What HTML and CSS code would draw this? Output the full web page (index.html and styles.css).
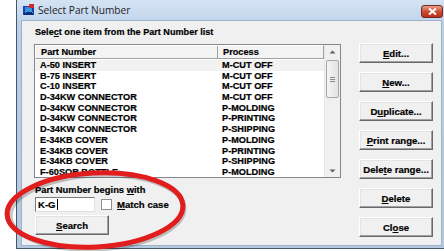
FILE: index.html
```html
<!DOCTYPE html>
<html lang="en">
<head>
    <meta charset="UTF-8">
    <title>Select Part Number</title>
    <link rel="stylesheet" href="styles.css">
</head>
<body>
    <div class="window">
        <div class="titlebar">
            <svg class="app-icon" width="12" height="12" viewBox="0 0 12 12">
                <rect x="0" y="2" width="11" height="9" fill="#1a3fb0"/>
                <rect x="2" y="3" width="7" height="5" fill="#3a8ae0"/>
                <rect x="6" y="0" width="5" height="4" fill="#d02a2a"/>
                <rect x="1" y="8" width="9" height="3" fill="#0c2a80"/>
                <path d="M2 9 L6 5 L10 9" stroke="#30c0c0" stroke-width="1" fill="none"/>
            </svg>
            <span class="title">Select Part Number</span>
            <div class="close-btn">
                <svg width="9" height="7" viewBox="0 0 9 7">
                    <path d="M1 0.5 L8 6.5 M8 0.5 L1 6.5" stroke="#fff" stroke-width="2"/>
                </svg>
            </div>
        </div>

        <div class="client">
            <div class="left">
                <div class="caption">Sele<u>c</u>t one item from the Part Number list</div>

                <div class="listbox">
                    <div class="list-main">
                        <div class="list-head">
                            <div class="col-part">Part Number</div>
                            <div class="col-proc">Process</div>
                        </div>
                        <div class="rows" id="rows"></div>
                    </div>
                    <div class="scrollbar">
                        <div class="sb-arrow">
                            <svg width="7" height="4" viewBox="0 0 7 4"><path d="M0.5 3.5 L3.5 0.5 L6.5 3.5" fill="#606060"/></svg>
                        </div>
                        <div class="sb-thumb">
                            <span></span><span></span><span></span>
                        </div>
                        <div class="sb-track"></div>
                        <div class="sb-arrow">
                            <svg width="7" height="4" viewBox="0 0 7 4"><path d="M0.5 0.5 L3.5 3.5 L6.5 0.5" fill="#606060"/></svg>
                        </div>
                    </div>
                </div>

                <div class="search">
                    <div class="search-label">Part Number begins <u>w</u>ith</div>
                    <div class="search-line">
                        <div class="textbox">K-G<span class="caret"></span></div>
                        <div class="checkbox"></div>
                        <div class="check-label"><u>M</u>atch case</div>
                    </div>
                    <div class="btn search-btn"><u>S</u>earch</div>
                </div>
            </div>

            <div class="buttons">
                <div class="btn"><u>E</u>dit...</div>
                <div class="btn"><u>N</u>ew...</div>
                <div class="btn">D<u>u</u>plicate...</div>
                <div class="btn"><u>P</u>rint range...</div>
                <div class="btn">Dele<u>t</u>e range...</div>
                <div class="btn"><u>D</u>elete</div>
                <div class="btn">Cl<u>o</u>se</div>
            </div>
        </div>
    </div>

    <svg class="circle" width="200" height="85" viewBox="0 0 200 85">
        <ellipse cx="97" cy="46" rx="87" ry="37" transform="rotate(-3 97 46)" fill="none" stroke="rgba(0,0,0,0.22)" stroke-width="5" />
        <ellipse cx="95" cy="44" rx="88" ry="37" transform="rotate(-3 95 44)" fill="none" stroke="#e21d1d" stroke-width="5" />
    </svg>

    <script>
        // list data
        const parts = [
            ['A-50 INSERT', 'M-CUT OFF'],
            ['B-75 INSERT', 'M-CUT OFF'],
            ['C-10 INSERT', 'M-CUT OFF'],
            ['D-34KW CONNECTOR', 'M-CUT OFF'],
            ['D-34KW CONNECTOR', 'P-MOLDING'],
            ['D-34KW CONNECTOR', 'P-PRINTING'],
            ['D-34KW CONNECTOR', 'P-SHIPPING'],
            ['E-34KB COVER', 'P-MOLDING'],
            ['E-34KB COVER', 'P-PRINTING'],
            ['E-34KB COVER', 'P-SHIPPING'],
            ['F-60SOR BOTTLE', 'P-MOLDING']
        ];
        const rows = document.getElementById('rows');
        parts.forEach((p, i) => {
            const row = document.createElement('div');
            row.className = i === 0 ? 'row focused' : 'row';
            row.innerHTML = `<div class="col-part">${p[0]}</div><div class="col-proc">${p[1]}</div>`;
            rows.appendChild(row);
        });
    </script>
</body>
</html>
```

FILE: styles.css
```css
body {
    margin: 0;
    width: 444px;
    height: 251px;
    overflow: hidden;
    background: #ffffff;
    font-family: "Liberation Sans", Arial, sans-serif;
    position: relative;
}
.window {
    margin-left: 16px;
    width: 430px;
    height: 249px;
    box-sizing: border-box;
    border: 1px solid #4a5666;
    border-top: none;
    border-right: none;
    background: linear-gradient(#c6d9ee, #b9cfe6 40px, #b4c9e0);
    padding: 0 4px 2px 4px;
    display: flex;
    flex-direction: column;
}
.titlebar {
    height: 20px;
    display: flex;
    align-items: center;
    background: linear-gradient(#d5e3f3, #c3d6ec);
    margin: 0 -4px 0 -4px;
    padding: 0 3px 0 6px;
}
.app-icon {
    margin-right: 3px;
}
.title {
    font-family: "Open Sans", "Liberation Sans", sans-serif;
    font-size: 10.2px;
    color: #1e1e1e;
    flex: 1;
}
.close-btn {
    width: 22px;
    height: 13px;
    margin-top: 2px;
    box-sizing: border-box;
    border: 1px solid #6e2a20;
    border-radius: 3px;
    background: linear-gradient(#e8a08c, #cf4b33 50%, #b8301c);
    display: flex;
    align-items: center;
    justify-content: center;
}
.client {
    flex: 1;
    background: #f0f0f0;
    border: 1px solid #9db3cc;
    display: flex;
    padding: 4px 7px 0 12px;
    font-size: 9.2px;
    font-weight: bold;
    color: #000;
    -webkit-text-stroke: 0.2px #000;
}
.left {
    width: 307px;
    display: flex;
    flex-direction: column;
}
.caption {
    font-size: 9.1px;
    height: 19px;
    line-height: 14px;
    padding-left: 1px;
}
.listbox {
    height: 134px;
    box-sizing: border-box;
    border: 1px solid #828790;
    background: #fff;
    display: flex;
    overflow: hidden;
}
.list-main {
    flex: 1;
    display: flex;
    flex-direction: column;
}
.list-head {
    height: 14px;
    display: flex;
    align-items: center;
    background: #f3f3f3;
    border: 1px solid #a0a0a0;
    border-top-color: #fff;
    border-left-color: #fff;
    box-sizing: border-box;
}
.list-head .col-part {
    border-right: 1px solid #a0a0a0;
    height: 12px;
    line-height: 12px;
}
.col-part {
    width: 182px;
    padding-left: 5px;
    box-sizing: border-box;
}
.col-proc {
    padding-left: 5px;
}
.rows {
    padding-top: 1px;
}
.row {
    display: flex;
    height: 10.7px;
    line-height: 10.7px;
}
.row.focused {
    background: #f2f2f2;
}
.scrollbar {
    width: 15px;
    display: flex;
    flex-direction: column;
    background: #f0f0f0;
    border-left: 1px solid #e6e6e6;
}
.sb-arrow {
    height: 13px;
    display: flex;
    align-items: center;
    justify-content: center;
}
.sb-thumb {
    height: 38px;
    margin: 2px 1px 0 1px;
    box-sizing: border-box;
    border: 1px solid #a7a7a7;
    border-radius: 2px;
    background: linear-gradient(90deg, #f4f4f4, #e2e2e2);
    display: flex;
    flex-direction: column;
    align-items: center;
    justify-content: center;
    gap: 1px;
}
.sb-thumb span {
    width: 5px;
    height: 1px;
    background: #8a8a8a;
}
.sb-track {
    flex: 1;
}
.search {
    padding-top: 6px;
    padding-left: 1px;
}
.search-label {
    font-size: 9.4px;
    height: 12px;
    line-height: 12px;
}
.search-line {
    display: flex;
    align-items: center;
    margin-top: 1px;
    height: 15px;
}
.textbox {
    width: 60px;
    height: 15px;
    box-sizing: border-box;
    border: 1px solid #7a7a7a;
    border-right-color: #e0e0e0;
    border-bottom-color: #e0e0e0;
    background: #fff;
    padding-left: 2px;
    line-height: 13px;
    font-size: 9.6px;
    display: flex;
    align-items: center;
}
.caret {
    width: 1px;
    height: 11px;
    background: #000;
    margin-left: 1px;
}
.checkbox {
    width: 11px;
    height: 11px;
    box-sizing: border-box;
    border: 1px solid #8e8f8f;
    background: #fff;
    margin-left: 6px;
}
.check-label {
    margin-left: 5px;
    font-size: 9.6px;
}
.search-btn {
    width: 60px;
    height: 19px;
    margin-top: 3px;
}
.buttons {
    margin-left: 18px;
    padding-top: 18px;
    display: flex;
    flex-direction: column;
    gap: 9px;
}
.btn {
    width: 74px;
    height: 20px;
    box-sizing: border-box;
    border: 1px solid;
    border-color: #ffffff #696969 #696969 #ffffff;
    box-shadow: inset -1px -1px 0 #a0a0a0, inset 1px 1px 0 #e3e3e3;
    background: #f0f0f0;
    display: flex;
    align-items: center;
    justify-content: center;
    font-size: 9.6px;
}
.circle {
    position: absolute;
    left: 0;
    top: 166px;
}
```
